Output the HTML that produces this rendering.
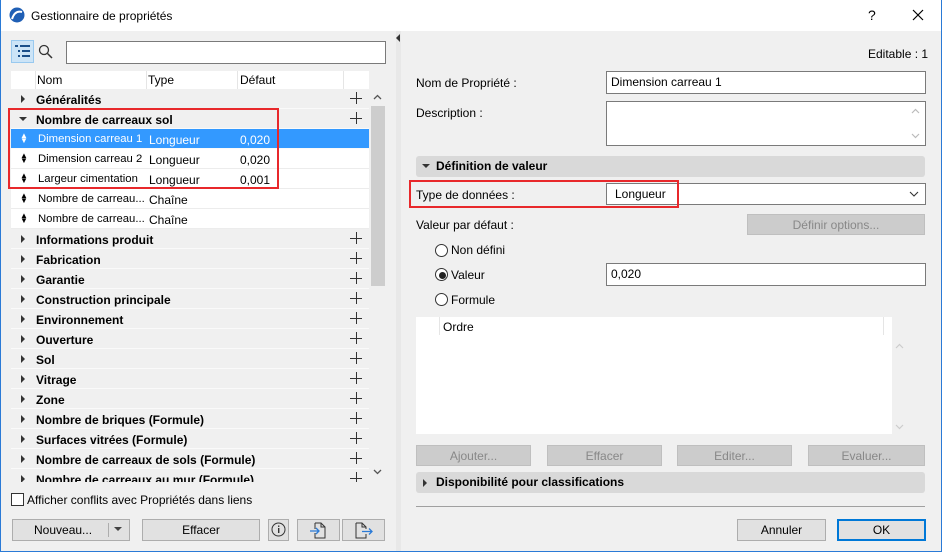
<!DOCTYPE html>
<html><head><meta charset="utf-8"><style>
*{box-sizing:border-box;margin:0;padding:0}
body{width:942px;height:552px;overflow:hidden;background:#f0f0f0;font-family:"Liberation Sans",sans-serif;font-size:12px;color:#000;position:relative}
.a{position:absolute}
.tb{left:0;top:0;width:942px;height:31px;background:#fff}
.bl{left:0;top:0;width:1px;height:552px;background:#2a7ad6}
.br{right:0;top:0;width:1px;height:552px;background:#2a7ad6}
.bb{left:0;bottom:0;width:942px;height:1px;background:#2a7ad6}
.list{left:11px;top:71px;width:358px;height:411px;overflow:hidden;background:#f0f0f0}
.hdr{left:0;top:0;width:358px;height:18px;background:#fff}
.hdr span{position:absolute;top:2px}
.row{position:absolute;left:0;width:358px;height:20px;border-bottom:1px solid #fafafa;background:#f0f0f0}
.row.c{background:#fff;border-bottom:1px solid #ececec}
.row.s{background:#3399ff;color:#fff}
.row span{position:absolute;top:4px;white-space:nowrap}
.row span.n{font-size:11.3px;width:108px;overflow:hidden;top:4px}
.g{font-weight:bold;left:25px}
.tri{position:absolute;left:10px;top:6px;width:0;height:0;border-top:4px solid transparent;border-bottom:4px solid transparent;border-left:4px solid #333}
.trid{position:absolute;left:8px;top:8px;border-left:4px solid transparent;border-right:4px solid transparent;border-top:4px solid #333}
.plus{position:absolute;left:339px;top:3px;width:12px;height:12px}
.plus:before{content:"";position:absolute;left:0;top:6px;width:12px;height:1px;background:#333}
.plus:after{content:"";position:absolute;left:6px;top:0;width:1px;height:12px;background:#333}
.ud{position:absolute;left:9px;top:4px;font-size:8px;line-height:5px}
.btn{position:absolute;background:#e1e1e1;border:1px solid #adadad;text-align:center;line-height:20px}
.dis{background:#cccccc;border:1px solid #bfbfbf;color:#888}
.inp{position:absolute;background:#fff;border:1px solid #7a7a7a;padding-left:4px;line-height:20px}
.sec{position:absolute;left:416px;width:509px;height:21px;background:#d9d9d9;border-radius:3px;font-weight:bold;line-height:21px;padding-left:20px}
.rad{position:absolute;width:13px;height:13px;border:1px solid #333;border-radius:50%;background:#fff}
</style></head><body>
<div class="a tb"></div>
<svg class="a" style="left:9px;top:7px" width="16" height="16"><circle cx="8" cy="8" r="7.5" fill="#1f5fb5"/><path d="M3 12 Q6 3 13 5" stroke="#fff" stroke-width="2" fill="none"/></svg>
<div class="a" style="left:31px;top:9px;font-size:12px">Gestionnaire de propriétés</div>
<div class="a" style="left:868px;top:7px;font-size:14px">?</div>
<svg class="a" style="left:912px;top:9px" width="12" height="12"><path d="M1 1L11 11M11 1L1 11" stroke="#000" stroke-width="1.2"/></svg>

<div class="a" style="left:11px;top:40px;width:23px;height:23px;background:#cce4f7;border:1px solid #99c9ef"></div>
<svg class="a" style="left:15px;top:45px" width="16" height="13"><rect x="0" y="0" width="3" height="2" fill="#1a4f8a"/><rect x="5" y="0" width="10" height="2" fill="#1a4f8a"/><rect x="3" y="5" width="2" height="2" fill="#1a4f8a"/><rect x="7" y="5" width="8" height="2" fill="#1a4f8a"/><rect x="3" y="10" width="2" height="2" fill="#1a4f8a"/><rect x="7" y="10" width="8" height="2" fill="#1a4f8a"/></svg>
<svg class="a" style="left:38px;top:44px" width="15" height="15"><circle cx="6" cy="6" r="4.5" stroke="#333" stroke-width="1.3" fill="none"/><path d="M9.5 9.5L14 14" stroke="#333" stroke-width="1.5"/></svg>
<div class="inp" style="left:66px;top:41px;width:320px;height:23px"></div>

<div class="a list">
<div class="a hdr"><span style="left:26px">Nom</span><span style="left:137px">Type</span><span style="left:229px">Défaut</span>
<div class="a" style="left:24px;top:0;width:1px;height:18px;background:#e5e5e5"></div>
<div class="a" style="left:135px;top:0;width:1px;height:18px;background:#e5e5e5"></div>
<div class="a" style="left:226px;top:0;width:1px;height:18px;background:#e5e5e5"></div>
<div class="a" style="left:332px;top:0;width:1px;height:18px;background:#e5e5e5"></div>
</div>
<div class="row" style="top:18px"><i class="tri"></i><span class="g">Généralités</span><i class="plus"></i></div>
<div class="row" style="top:38px"><i class="trid"></i><span class="g">Nombre de carreaux sol</span><i class="plus"></i></div>
<div class="row s" style="top:58px"><span class="ud">▲<br>▼</span><span class="n" style="left:27px">Dimension carreau 1</span><span style="left:138px">Longueur</span><span style="left:229px">0,020</span></div>
<div class="row c" style="top:78px"><span class="ud">▲<br>▼</span><span class="n" style="left:27px">Dimension carreau 2</span><span style="left:138px">Longueur</span><span style="left:229px">0,020</span></div>
<div class="row c" style="top:98px"><span class="ud">▲<br>▼</span><span class="n" style="left:27px">Largeur cimentation</span><span style="left:138px">Longueur</span><span style="left:229px">0,001</span></div>
<div class="row c" style="top:118px"><span class="ud">▲<br>▼</span><span class="n" style="left:27px">Nombre de carreau...</span><span style="left:138px">Chaîne</span></div>
<div class="row c" style="top:138px"><span class="ud">▲<br>▼</span><span class="n" style="left:27px">Nombre de carreau...</span><span style="left:138px">Chaîne</span></div>
<div class="row" style="top:158px"><i class="tri"></i><span class="g">Informations produit</span><i class="plus"></i></div>
<div class="row" style="top:178px"><i class="tri"></i><span class="g">Fabrication</span><i class="plus"></i></div>
<div class="row" style="top:198px"><i class="tri"></i><span class="g">Garantie</span><i class="plus"></i></div>
<div class="row" style="top:218px"><i class="tri"></i><span class="g">Construction principale</span><i class="plus"></i></div>
<div class="row" style="top:238px"><i class="tri"></i><span class="g">Environnement</span><i class="plus"></i></div>
<div class="row" style="top:258px"><i class="tri"></i><span class="g">Ouverture</span><i class="plus"></i></div>
<div class="row" style="top:278px"><i class="tri"></i><span class="g">Sol</span><i class="plus"></i></div>
<div class="row" style="top:298px"><i class="tri"></i><span class="g">Vitrage</span><i class="plus"></i></div>
<div class="row" style="top:318px"><i class="tri"></i><span class="g">Zone</span><i class="plus"></i></div>
<div class="row" style="top:338px"><i class="tri"></i><span class="g">Nombre de briques (Formule)</span><i class="plus"></i></div>
<div class="row" style="top:358px"><i class="tri"></i><span class="g">Surfaces vitrées (Formule)</span><i class="plus"></i></div>
<div class="row" style="top:378px"><i class="tri"></i><span class="g">Nombre de carreaux de sols (Formule)</span><i class="plus"></i></div>
<div class="row" style="top:398px"><i class="tri"></i><span class="g">Nombre de carreaux au mur (Formule)</span><i class="plus"></i></div>
</div>
<div class="a" style="left:369px;top:89px;width:17px;height:393px;background:#f0f0f0"></div>
<div class="a" style="left:371px;top:106px;width:14px;height:180px;background:#cdcdcd"></div>
<svg class="a" style="left:373px;top:94px" width="9" height="6"><path d="M1 5L4.5 1.5L8 5" stroke="#555" stroke-width="1.3" fill="none"/></svg>
<svg class="a" style="left:373px;top:469px" width="9" height="6"><path d="M1 1L4.5 4.5L8 1" stroke="#555" stroke-width="1.3" fill="none"/></svg>
<div class="a" style="left:8px;top:108px;width:271px;height:81px;border:2px solid #e8282b"></div>

<div class="a" style="left:11px;top:493px;width:13px;height:13px;border:1px solid #333;background:#fff"></div>
<div class="a" style="left:27px;top:493px">Afficher conflits avec Propriétés dans liens</div>
<div class="btn" style="left:12px;top:519px;width:118px;height:22px;text-align:left;padding-left:21px">Nouveau...</div>
<div class="a" style="left:108px;top:523px;width:1px;height:14px;background:#adadad"></div>
<div class="a" style="left:114px;top:527px;border-left:4px solid transparent;border-right:4px solid transparent;border-top:4px solid #444"></div>
<div class="btn" style="left:142px;top:519px;width:118px;height:22px">Effacer</div>
<div class="btn" style="left:268px;top:519px;width:21px;height:22px"></div>
<svg class="a" style="left:271px;top:522px" width="15" height="15"><circle cx="7.5" cy="7.5" r="6.5" stroke="#333" fill="none"/><rect x="7" y="6" width="1.4" height="5" fill="#333"/><rect x="7" y="3.5" width="1.4" height="1.4" fill="#333"/></svg>
<div class="btn" style="left:297px;top:519px;width:43px;height:22px"></div>
<svg class="a" style="left:309px;top:521px" width="18" height="18"><path d="M6 2H12L16 6V17H6V12M6 8V2" stroke="#333" fill="none"/><path d="M12 2V6H16" stroke="#333" fill="none"/><path d="M1 10H10M7 7L10 10L7 13" stroke="#2a7ad6" stroke-width="1.3" fill="none"/></svg>
<div class="btn" style="left:342px;top:519px;width:43px;height:22px"></div>
<svg class="a" style="left:354px;top:521px" width="20" height="18"><path d="M2 2H8L12 6V8M12 13V17H2V2" stroke="#333" fill="none"/><path d="M8 2V6H12" stroke="#333" fill="none"/><path d="M8 10.5H18M15 7.5L18 10.5L15 13.5" stroke="#2a7ad6" stroke-width="1.3" fill="none"/></svg>

<div class="a" style="left:396px;top:31px;width:5px;height:520px;background:#e8e8e8"></div>
<div class="a" style="left:396px;top:34px;border-top:4px solid transparent;border-bottom:4px solid transparent;border-right:4px solid #333"></div>

<div class="a" style="left:868px;top:47px">Editable : 1</div>
<div class="a" style="left:416px;top:76px">Nom de Propriété :</div>
<div class="inp" style="left:606px;top:71px;width:320px;height:23px">Dimension carreau 1</div>
<div class="a" style="left:416px;top:106px">Description :</div>
<div class="inp" style="left:606px;top:101px;width:320px;height:45px"></div>
<svg class="a" style="left:911px;top:108px" width="9" height="6"><path d="M1 5L4.5 1.5L8 5" stroke="#bbb" stroke-width="1.2" fill="none"/></svg>
<svg class="a" style="left:911px;top:133px" width="9" height="6"><path d="M1 1L4.5 4.5L8 1" stroke="#bbb" stroke-width="1.2" fill="none"/></svg>
<div class="sec" style="top:156px">Définition de valeur</div>
<div class="a" style="left:422px;top:164px;border-left:4px solid transparent;border-right:4px solid transparent;border-top:4px solid #333"></div>
<div class="a" style="left:416px;top:188px">Type de données :</div>
<div class="inp" style="left:606px;top:183px;width:320px;height:22px;padding-left:8px">Longueur</div>
<svg class="a" style="left:909px;top:191px" width="10" height="6"><path d="M1 1L5 5L9 1" stroke="#333" stroke-width="1.1" fill="none"/></svg>
<div class="a" style="left:409px;top:180px;width:270px;height:28px;border:2px solid #e8282b"></div>
<div class="a" style="left:416px;top:218px">Valeur par défaut :</div>
<div class="btn dis" style="left:747px;top:214px;width:178px;height:21px">Définir options...</div>
<div class="rad" style="left:435px;top:244px"></div><div class="a" style="left:451px;top:243px">Non défini</div>
<div class="rad" style="left:435px;top:268px"></div><div class="a" style="left:439px;top:272px;width:7px;height:7px;border-radius:50%;background:#222"></div><div class="a" style="left:451px;top:268px">Valeur</div>
<div class="inp" style="left:606px;top:263px;width:320px;height:23px">0,020</div>
<div class="rad" style="left:435px;top:293px"></div><div class="a" style="left:451px;top:293px">Formule</div>
<div class="a" style="left:416px;top:317px;width:476px;height:117px;background:#fff"></div>
<div class="a" style="left:439px;top:317px;width:1px;height:18px;background:#e5e5e5"></div>
<div class="a" style="left:883px;top:317px;width:1px;height:18px;background:#e5e5e5"></div>
<div class="a" style="left:443px;top:320px">Ordre</div>
<svg class="a" style="left:895px;top:343px" width="9" height="6"><path d="M1 5L4.5 1.5L8 5" stroke="#ccc" stroke-width="1.2" fill="none"/></svg>
<svg class="a" style="left:895px;top:424px" width="9" height="6"><path d="M1 1L4.5 4.5L8 1" stroke="#ccc" stroke-width="1.2" fill="none"/></svg>
<div class="btn dis" style="left:416px;top:445px;width:115px;height:21px">Ajouter...</div>
<div class="btn dis" style="left:547px;top:445px;width:115px;height:21px">Effacer</div>
<div class="btn dis" style="left:677px;top:445px;width:115px;height:21px">Editer...</div>
<div class="btn dis" style="left:808px;top:445px;width:117px;height:21px">Evaluer...</div>
<div class="sec" style="top:472px">Disponibilité pour classifications</div>
<div class="a" style="left:423px;top:479px;border-top:4px solid transparent;border-bottom:4px solid transparent;border-left:4px solid #333"></div>
<div class="a" style="left:416px;top:506px;width:509px;height:1px;background:#a0a0a0"></div>
<div class="btn" style="left:737px;top:519px;width:89px;height:22px">Annuler</div>
<div class="btn" style="left:837px;top:519px;width:89px;height:22px;border:2px solid #0078d7;line-height:18px">OK</div>

<div class="a bl"></div><div class="a br"></div><div class="a bb"></div>
</body></html>
